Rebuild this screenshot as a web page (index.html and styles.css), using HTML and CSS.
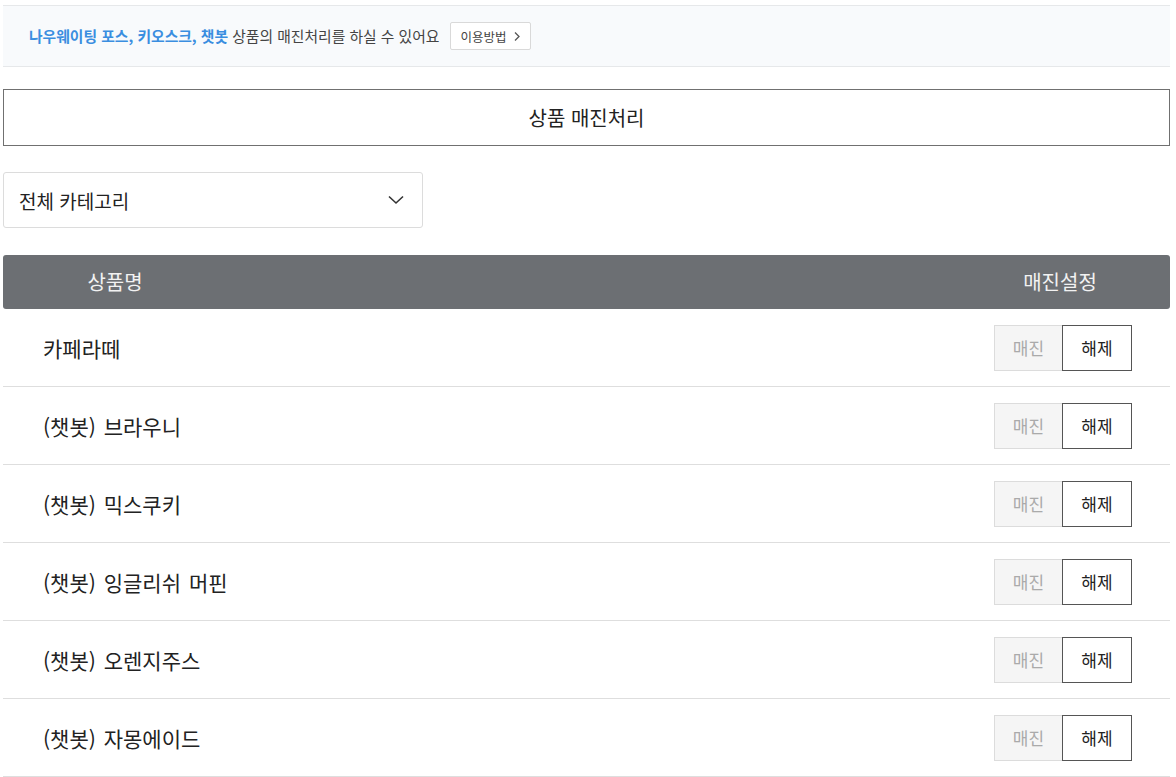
FILE: index.html
```html
<!DOCTYPE html>
<html lang="ko">
<head>
  <meta charset="UTF-8" />
  <meta name="viewport" content="width=device-width, initial-scale=1.0"/>
  <title>상품 매진처리</title>
  <link rel="stylesheet" href="styles.css">
</head>
<body>
  <div class="container">
    <div class="notice">
      <p class="notice-text">
        <span class="highlight">나우웨이팅 포스, 키오스크, 챗봇</span> 상품의 매진처리를 하실 수 있어요
      </p>
      <button class="guide-btn">이용방법
        <svg width="8" height="11" viewBox="0 0 8 11"><path d="M2 1.5 L6 5.5 L2 9.5" fill="none" stroke="#555" stroke-width="1.3"/></svg>
      </button>
    </div>

    <h1 class="title-box">상품 매진처리</h1>

    <div class="category-select">
      <span>전체 카테고리</span>
      <svg width="18" height="10" viewBox="0 0 18 10"><path d="M2 1.5 L9 8 L16 1.5" fill="none" stroke="#333" stroke-width="1.6"/></svg>
    </div>

    <div class="product-table">
      <div class="table-head">
        <span class="col-name">상품명</span>
        <span class="col-status">매진설정</span>
      </div>

      <div class="row">
        <span class="name">카페라떼</span>
        <div class="toggle"><button class="sold-out">매진</button><button class="release">해제</button></div>
      </div>
      <div class="row">
        <span class="name">(챗봇) 브라우니</span>
        <div class="toggle"><button class="sold-out">매진</button><button class="release">해제</button></div>
      </div>
      <div class="row">
        <span class="name">(챗봇) 믹스쿠키</span>
        <div class="toggle"><button class="sold-out">매진</button><button class="release">해제</button></div>
      </div>
      <div class="row">
        <span class="name">(챗봇) 잉글리쉬 머핀</span>
        <div class="toggle"><button class="sold-out">매진</button><button class="release">해제</button></div>
      </div>
      <div class="row">
        <span class="name">(챗봇) 오렌지주스</span>
        <div class="toggle"><button class="sold-out">매진</button><button class="release">해제</button></div>
      </div>
      <div class="row">
        <span class="name">(챗봇) 자몽에이드</span>
        <div class="toggle"><button class="sold-out">매진</button><button class="release">해제</button></div>
      </div>
    </div>
  </div>
</body>
</html>
```

FILE: styles.css
```css
* {
  box-sizing: border-box;
  font-family: "Noto Sans CJK KR", "Noto Sans", sans-serif;
}

body {
  margin: 0;
  background: #ffffff;
  color: #222;
}

.container {
  width: 1167px;
  margin-left: 3px;
  padding-top: 5px;
}

.notice {
  display: flex;
  align-items: center;
  gap: 11px;
  height: 62px;
  padding-left: 26px;
  background: #f8fafc;
  border-top: 1px solid #e6e8ea;
  border-bottom: 1px solid #e6e8ea;
}

.notice-text {
  margin: 0 0 1px;
  font-size: 14.8px;
  color: #444;
}

.highlight {
  color: #3a8ee0;
  font-weight: bold;
}

.guide-btn {
  display: flex;
  align-items: center;
  gap: 7px;
  height: 28px;
  padding: 0 9px;
  background: #fff;
  border: 1px solid #d9d9d9;
  border-radius: 2px;
  font-size: 12.5px;
  color: #444;
}

.title-box {
  margin: 22px 0 0;
  height: 57px;
  border: 1px solid #707070;
  display: flex;
  align-items: center;
  justify-content: center;
  font-size: 20px;
  font-weight: normal;
  color: #222;
}

.category-select {
  margin-top: 26px;
  width: 420px;
  height: 56px;
  padding: 0 17px 0 15px;
  border: 1px solid #dcdcdc;
  border-radius: 3px;
  display: flex;
  align-items: center;
  justify-content: space-between;
  font-size: 19px;
}

.product-table {
  margin-top: 27px;
}

.table-head {
  height: 54px;
  padding-bottom: 2px;
  background: #6c6f73;
  border-radius: 3px;
  display: flex;
  align-items: center;
  justify-content: space-between;
  color: #f2f2f2;
  font-size: 20px;
}

.col-name {
  width: 224px;
  text-align: center;
}

.col-status {
  width: 220px;
  text-align: center;
}

.row {
  height: 78px;
  display: flex;
  align-items: center;
  justify-content: space-between;
  padding: 0 38px 0 40px;
  border-bottom: 1px solid #dedede;
}

.name {
  font-size: 21px;
  color: #222;
  word-spacing: 2px;
}

.toggle {
  display: flex;
}

.toggle button {
  height: 46px;
  font-size: 17px;
  background: #fff;
  cursor: pointer;
}

.sold-out {
  width: 68px;
  background: #f5f5f5 !important;
  border: 1px solid #dcdcdc;
  border-right: none;
  color: #aaa;
}

.release {
  width: 70px;
  border: 1px solid #555;
  color: #222;
}
```
